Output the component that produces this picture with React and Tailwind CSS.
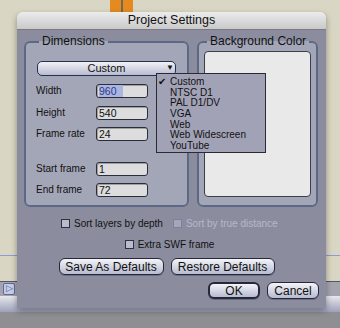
const font = { fontFamily: '"Liberation Sans", Arial, sans-serif' };

const Input = ({ value, selected }) => (
  <div className="w-[52px] h-[14px] rounded-[3px] border border-[#2a2d3c] bg-[#dddddd] shadow-[inset_1px_1px_0_#a0a0a0] pl-[2px] text-[10.5px] leading-[12px] text-[#111] flex items-center">
    {selected ? <span className="bg-[#aab6e0] text-[#2f3b86] pr-[6px]">{value}</span> : value}
  </div>
);

const Field = ({ label, value, selected }) => (
  <div className="flex items-center h-[14px]">
    <span className="w-[60px] text-[10px] leading-[14px] text-[#111]">{label}</span>
    <Input value={value} selected={selected} />
  </div>
);

const Check = ({ label, disabled }) => (
  <div className="flex items-center gap-[4px]">
    <div
      className={
        "w-[9px] h-[9px] border " +
        (disabled ? "border-[#7c809a] bg-[#a4a7bc]" : "border-[#2e3142] bg-[#b9bccd]")
      }
    />
    <span className={"text-[10px] " + (disabled ? "text-[#b6b8c9]" : "text-[#111]")}>{label}</span>
  </div>
);

const Button = ({ children, width, primary }) => (
  <div
    className={
      "h-[17px] flex items-center justify-center rounded-[6px] bg-gradient-to-b from-[#f4f4f8] to-[#b7bbd0] text-[12px] text-[#111] shadow-[0_1px_0_#6a6d80] " +
      (primary ? "border-2 border-[#25283a]" : "border border-[#25283a]")
    }
    style={{ width }}
  >
    {children}
  </div>
);

const menuItems = ["Custom", "NTSC D1", "PAL D1/DV", "VGA", "Web", "Web Widescreen", "YouTube"];

export default function App() {
  return (
    <div className="relative w-[340px] h-[328px] overflow-hidden bg-[#d9d6c3] flex flex-col" style={font}>
      {/* background app */}
      <div className="h-[12px] flex">
        <div className="ml-[110px] w-[23px] h-[12px] bg-[#e48a20] flex justify-center">
          <div className="w-[2px] h-full bg-[#6f6a55]" />
        </div>
      </div>
      <div className="flex-1" />
      <div className="h-px bg-[#8d9ad6]" />
      <div className="h-[25px]" />
      <div className="h-px bg-[#555866]" />
      <div className="h-[14px] bg-[#a3a4ae] flex items-center px-[3px]">
        <div className="w-[12px] h-[12px] rounded-[2px] border border-[#5a6a9a] bg-[#c8cce0] flex items-center justify-center text-[9px] text-[#3f5cc0]">
          ▷
        </div>
      </div>
      <div className="h-[16px] bg-gradient-to-b from-[#e7e7ec] to-[#9ea1ba] pl-[58px] text-[12px] leading-[14px] text-[#222]">
        Timeline
      </div>
      <div className="h-[16px] bg-[#8f8f93]" />

      {/* dialog */}
      <div className="absolute left-[17px] top-[12px] w-[309px] h-[296px] rounded-t-[5px] bg-[#8b8d9f] shadow-[0_3px_6px_rgba(0,0,0,0.35)] flex flex-col">
        <div className="h-[18px] rounded-t-[5px] bg-gradient-to-b from-[#ececec] to-[#c9c9c9] border-b border-[#7a7a80] flex items-center justify-center text-[12.5px] text-[#111]">
          Project Settings
        </div>
        <div className="flex-1 flex flex-col px-[7px] pt-[5px]">
          <div className="flex gap-[8px]">
            <fieldset className="relative w-[165px] h-[172px] border-2 border-[#5b6986] rounded-[6px] bg-[#a3a6b7] px-[10px]">
              <legend className="ml-[3px] px-[3px] text-[12px] leading-[13px] text-[#111]">Dimensions</legend>
              <div className="relative mt-[13px] ml-[1px]">
                <div className="h-[15px] w-[139px] rounded-[5px] border border-[#283050] bg-gradient-to-b from-[#f2f2f6] to-[#b9bcd0] flex items-center justify-center text-[11px] text-[#111]">
                  Custom
                  <span className="absolute right-[3px] top-[3px] text-[8px] leading-[8px]">▼</span>
                </div>
                <div className="absolute left-[119px] top-[12px] z-10 w-[110px] h-[80px] bg-[#a2a2b6] border border-[#2a2a36] pt-[3px] flex flex-col">
                  {menuItems.map((m, i) => (
                    <div key={m} className="relative h-[10.7px] pl-[13px] text-[10px] leading-[10.7px] text-[#111]">
                      {i === 0 && <span className="absolute left-[1px] top-0 text-[10px]">✔</span>}
                      {m}
                    </div>
                  ))}
                </div>
              </div>
              <div className="flex flex-col gap-[7.5px] mt-[8px]">
                <Field label="Width" value="960" selected />
                <Field label="Height" value="540" />
                <Field label="Frame rate" value="24" />
              </div>
              <div className="flex flex-col gap-[7px] mt-[21px]">
                <Field label="Start frame" value="1" />
                <Field label="End frame" value="72" />
              </div>
            </fieldset>
            <fieldset className="w-[121px] h-[172px] border-2 border-[#5b6986] rounded-[6px] bg-[#a3a6b7] px-[5px]">
              <legend className="ml-[3px] px-[3px] text-[12px] leading-[13px] text-[#111]">Background Color</legend>
              <div className="mt-[3px] h-[146px] rounded-[4px] border border-[#3a3d4a] bg-[#e9e9e9]" />
            </fieldset>
          </div>
          <div className="flex mt-[9px] pl-[37px] gap-[10px]">
            <Check label="Sort layers by depth" />
            <Check label="Sort by true distance" disabled />
          </div>
          <div className="flex justify-center mt-[6px] pr-[4px]">
            <Check label="Extra SWF frame" />
          </div>
          <div className="flex justify-center gap-[7px] mt-[6px] pr-[10px]">
            <Button width={105}>Save As Defaults</Button>
            <Button width={104}>Restore Defaults</Button>
          </div>
          <div className="flex justify-end gap-[7px] mt-[7px]">
            <Button width={52} primary>OK</Button>
            <Button width={52}>Cancel</Button>
          </div>
        </div>
      </div>
    </div>
  );
}
